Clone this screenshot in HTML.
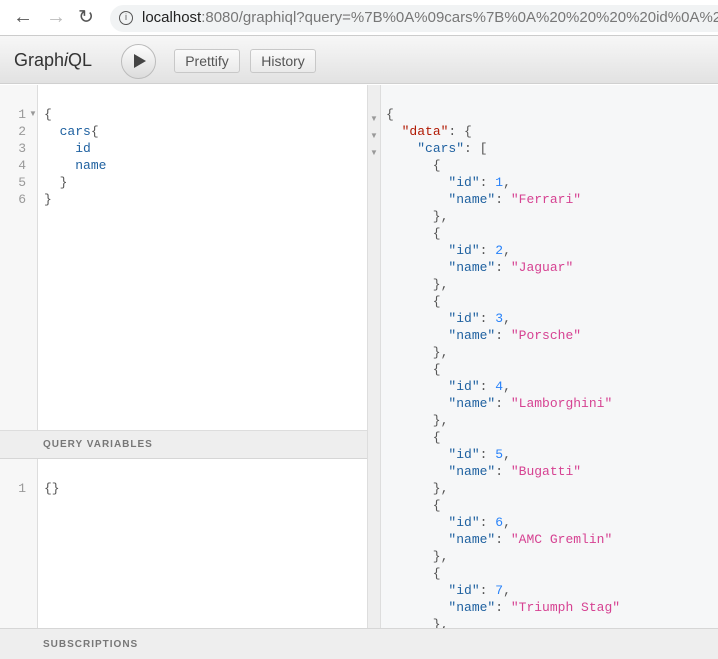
<!DOCTYPE html>
<html><head><style>
*{margin:0;padding:0;box-sizing:border-box}
body{width:718px;height:659px;overflow:hidden;background:#fff;font-family:"Liberation Sans",sans-serif;position:relative}
.abs{position:absolute}
.code{font-family:"Liberation Mono",monospace;font-size:13px;line-height:17px;white-space:pre}
.k{color:#1f61a0}.s{color:#d64292}.n{color:#2882f9}.d{color:#b11a04}.p{color:#555}
.btn{position:absolute;top:49px;height:24px;border:1px solid #c8c8c8;border-radius:3px;background:linear-gradient(#fafafa,#eaeaea);font-size:14px;color:#555;line-height:22px;text-align:center}
</style></head><body>
<div class="abs" style="left:0;top:0;width:718px;height:36px;background:#fff;border-bottom:1px solid #ccc"></div>
<div class="abs" style="left:110px;top:5px;width:620px;height:27px;background:#f1f3f4;border-radius:14px"></div>
<div class="abs" style="left:13px;top:6px;font-size:20px;color:#555">←</div>
<div class="abs" style="left:46px;top:6px;font-size:20px;color:#bbb">→</div>
<div class="abs" style="left:78px;top:6px;font-size:19px;color:#555">↻</div>
<div class="abs" style="left:119px;top:11px;width:14px;height:14px;border:1.5px solid #555;border-radius:50%;font-size:9px;text-align:center;line-height:11px;color:#555">i</div>
<div class="abs" style="left:142px;top:9px;font-size:15px;color:#222;white-space:nowrap">localhost<span style="color:#777">:8080/graphiql?query=%7B%0A%09cars%7B%0A%20%20%20%20id%0A%20%2</span></div>

<div class="abs" style="left:0;top:36px;width:718px;height:48px;background:linear-gradient(#f7f7f7,#e2e2e2);border-bottom:1px solid #d0d0d0"></div>
<div class="abs" style="left:14px;top:50px;font-size:18px;color:#333">Graph<i>i</i>QL</div>
<div class="abs" style="left:121px;top:44px;width:35px;height:35px;border-radius:50%;border:1px solid #bbb;background:linear-gradient(#fdfdfd,#dcdcdc)"></div>
<div class="abs" style="left:134px;top:54px;width:0;height:0;border-left:12px solid #444;border-top:7px solid transparent;border-bottom:7px solid transparent"></div>
<div class="btn" style="left:174px;width:66px">Prettify</div>
<div class="btn" style="left:250px;width:66px">History</div>

<div class="abs" style="left:0;top:85px;width:38px;height:345px;background:#f7f7f7;border-right:1px solid #ddd"></div>
<div class="abs code" style="left:0;top:106px;width:26px;text-align:right;color:#999">1
2
3
4
5
6</div>
<div class="abs" style="left:29px;top:109px;font-size:8px;color:#999">▼</div>
<div class="abs code" style="left:44px;top:106px;color:#555">{
  <span class="k">cars</span>{
    <span class="k">id</span>
    <span class="k">name</span>
  }
}</div>
<div class="abs" style="left:0;top:430px;width:367px;height:29px;background:#eee;border-top:1px solid #ddd;border-bottom:1px solid #d6d6d6"></div>
<div class="abs" style="left:43px;top:439px;font-size:10px;font-weight:bold;letter-spacing:1px;color:#777">QUERY VARIABLES</div>
<div class="abs" style="left:0;top:459px;width:38px;height:170px;background:#f7f7f7;border-right:1px solid #ddd"></div>
<div class="abs code" style="left:0;top:480px;width:26px;text-align:right;color:#999">1</div>
<div class="abs code" style="left:44px;top:480px;color:#555">{}</div>

<div class="abs" style="left:367px;top:85px;width:14px;height:544px;background:#eee;border-left:1px solid #ddd;border-right:1px solid #ddd"></div>
<div class="abs" style="left:381px;top:85px;width:337px;height:544px;background:#f6f7f8"></div>
<div class="abs" style="left:370px;top:110px;font-size:8px;color:#999;line-height:17px">▼<br>▼<br>▼</div>
<div class="abs code" style="left:386px;top:106px;color:#555">{
  <span class="d">"data"</span>: {
    <span class="k">"cars"</span>: [
      {
        <span class="k">"id"</span>: <span class="n">1</span>,
        <span class="k">"name"</span>: <span class="s">"Ferrari"</span>
      },
      {
        <span class="k">"id"</span>: <span class="n">2</span>,
        <span class="k">"name"</span>: <span class="s">"Jaguar"</span>
      },
      {
        <span class="k">"id"</span>: <span class="n">3</span>,
        <span class="k">"name"</span>: <span class="s">"Porsche"</span>
      },
      {
        <span class="k">"id"</span>: <span class="n">4</span>,
        <span class="k">"name"</span>: <span class="s">"Lamborghini"</span>
      },
      {
        <span class="k">"id"</span>: <span class="n">5</span>,
        <span class="k">"name"</span>: <span class="s">"Bugatti"</span>
      },
      {
        <span class="k">"id"</span>: <span class="n">6</span>,
        <span class="k">"name"</span>: <span class="s">"AMC Gremlin"</span>
      },
      {
        <span class="k">"id"</span>: <span class="n">7</span>,
        <span class="k">"name"</span>: <span class="s">"Triumph Stag"</span>
      },</div>
<div class="abs" style="left:0;top:628px;width:718px;height:31px;background:#eee;border-top:1px solid #d6d6d6"></div>
<div class="abs" style="left:43px;top:639px;font-size:10px;font-weight:bold;letter-spacing:1px;color:#777">SUBSCRIPTIONS</div>
</body></html>
